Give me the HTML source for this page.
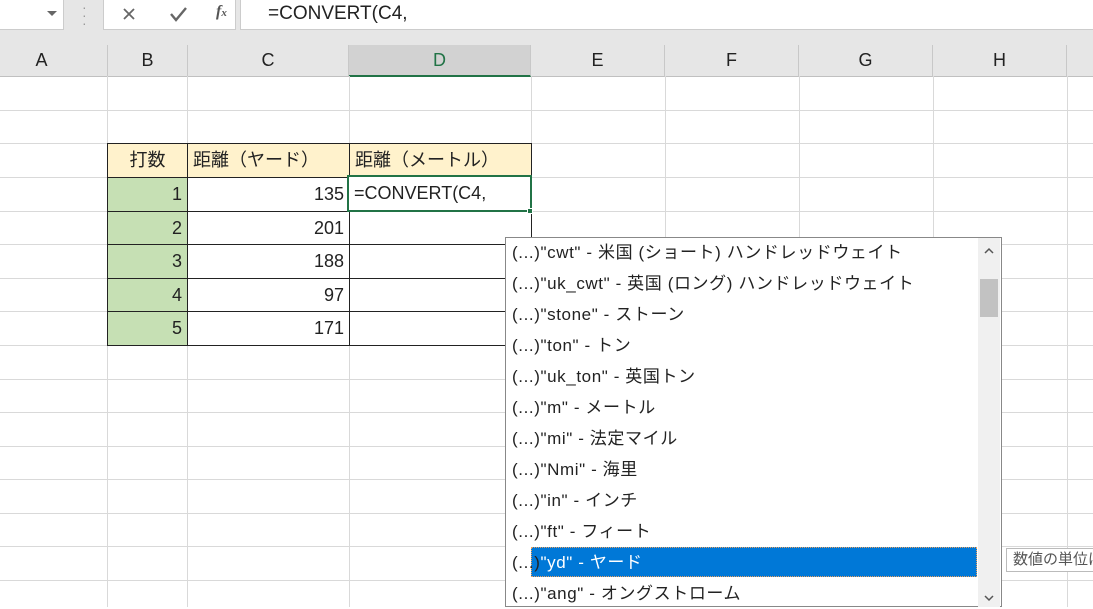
<!DOCTYPE html>
<html><head><meta charset="utf-8"><style>
*{margin:0;padding:0;box-sizing:border-box}
body{width:1093px;height:607px;overflow:hidden;background:#fff;position:relative;font-family:"Liberation Sans","Noto Sans CJK JP",sans-serif;color:#222}
.a{position:absolute}
.vl{position:absolute;width:1px;background:#d9d9d9;top:76px;height:531px}
.hl{position:absolute;height:1px;background:#d9d9d9;left:0;width:1093px}
.ch{position:absolute;top:45px;height:32px;line-height:31px;text-align:center;font-size:18px;color:#222;border-right:1px solid #c8c8c8;border-bottom:1px solid #c0c0c0;background:#e6e6e6}
.cell{position:absolute;font-size:18px;line-height:33px;padding:0 5px;border:1px solid #222}
.it{position:absolute;left:512px;font-size:17px;color:#222;white-space:nowrap;height:30px;line-height:30px;letter-spacing:0.6px}
</style></head><body>
<!-- formula bar -->
<div class="a" style="left:0;top:0;width:1093px;height:45px;background:#e6e6e6"></div>
<div class="a" style="left:0;top:0;width:64px;height:30px;background:#fff;border-right:1px solid #ccc;border-bottom:1px solid #ccc"></div>
<div class="a" style="left:47px;top:11px;border-left:5px solid transparent;border-right:5px solid transparent;border-top:5px solid #666"></div>
<div class="a" style="left:82px;top:3px;font-size:14px;color:#999;line-height:8px">·<br>·<br>·</div>
<div class="a" style="left:103px;top:0;width:133px;height:30px;background:#fff;border:1px solid #ccc;border-top:none"></div>
<svg class="a" style="left:118px;top:4px" width="130" height="22">
<path d="M6 5 L16 15 M16 5 L6 15" stroke="#666" stroke-width="1.8" fill="none"/>
<path d="M53 10 L58 16 L68 4" stroke="#666" stroke-width="2.4" fill="none"/>
</svg>
<div class="a" style="left:216px;top:3px;font-size:16px;color:#555;font-family:'Liberation Serif',serif;font-style:italic;font-weight:bold">f<span style="font-size:11px">x</span></div>
<div class="a" style="left:240px;top:0;width:853px;height:30px;background:#fff;border-left:1px solid #ccc;border-bottom:1px solid #ccc"></div>
<div class="a" style="left:268px;top:3px;font-size:19px;color:#222">=CONVERT(C4,</div>
<!-- column headers -->
<div class="a" style="left:0;top:45px;width:1093px;height:32px;background:#e6e6e6;border-bottom:1px solid #c0c0c0"></div>
<div class="ch" style="left:0;width:108px;text-indent:-24px">A</div>
<div class="ch" style="left:108px;width:80px">B</div>
<div class="ch" style="left:188px;width:161px">C</div>
<div class="ch" style="left:349px;width:182px;background:#d2d2d2;color:#217346;border-bottom:2px solid #217346">D</div>
<div class="ch" style="left:531px;width:134px">E</div>
<div class="ch" style="left:665px;width:134px">F</div>
<div class="ch" style="left:799px;width:134px">G</div>
<div class="ch" style="left:933px;width:134px">H</div>
<!-- grid -->
<div class="vl" style="left:107px"></div><div class="vl" style="left:187px"></div><div class="vl" style="left:349px"></div><div class="vl" style="left:531px"></div><div class="vl" style="left:665px"></div><div class="vl" style="left:799px"></div><div class="vl" style="left:933px"></div><div class="vl" style="left:1067px"></div>
<div class="hl" style="top:110px"></div><div class="hl" style="top:143px"></div><div class="hl" style="top:177px"></div><div class="hl" style="top:211px"></div><div class="hl" style="top:244px"></div><div class="hl" style="top:278px"></div><div class="hl" style="top:311px"></div><div class="hl" style="top:345px"></div><div class="hl" style="top:379px"></div><div class="hl" style="top:412px"></div><div class="hl" style="top:446px"></div><div class="hl" style="top:479px"></div><div class="hl" style="top:513px"></div><div class="hl" style="top:546px"></div><div class="hl" style="top:580px"></div>
<!-- table -->
<div class="cell" style="left:107px;top:143px;width:81px;height:35px;background:#fff2cc;text-align:center">打数</div>
<div class="cell" style="left:187px;top:143px;width:163px;height:35px;background:#fff2cc">距離（ヤード）</div>
<div class="cell" style="left:349px;top:143px;width:183px;height:35px;background:#fff2cc">距離（メートル）</div>
<div class="cell" style="left:107px;top:177px;width:81px;height:35px;background:#c6e0b4;text-align:right">1</div>
<div class="cell" style="left:187px;top:177px;width:163px;height:35px;text-align:right">135</div>
<div class="cell" style="left:349px;top:177px;width:183px;height:35px"></div>
<div class="cell" style="left:107px;top:211px;width:81px;height:34px;background:#c6e0b4;text-align:right">2</div>
<div class="cell" style="left:187px;top:211px;width:163px;height:34px;text-align:right">201</div>
<div class="cell" style="left:349px;top:211px;width:183px;height:34px"></div>
<div class="cell" style="left:107px;top:244px;width:81px;height:35px;background:#c6e0b4;text-align:right">3</div>
<div class="cell" style="left:187px;top:244px;width:163px;height:35px;text-align:right">188</div>
<div class="cell" style="left:349px;top:244px;width:183px;height:35px"></div>
<div class="cell" style="left:107px;top:278px;width:81px;height:34px;background:#c6e0b4;text-align:right">4</div>
<div class="cell" style="left:187px;top:278px;width:163px;height:34px;text-align:right">97</div>
<div class="cell" style="left:349px;top:278px;width:183px;height:34px"></div>
<div class="cell" style="left:107px;top:311px;width:81px;height:35px;background:#c6e0b4;text-align:right">5</div>
<div class="cell" style="left:187px;top:311px;width:163px;height:35px;text-align:right">171</div>
<div class="cell" style="left:349px;top:311px;width:183px;height:35px"></div>
<!-- active cell -->
<div class="a" style="left:347px;top:175px;width:185px;height:37px;border:2px solid #217346;background:#fff;font-size:18px;line-height:33px;padding-left:5px">=CONVERT(C4,</div>
<div class="a" style="left:527px;top:208px;width:6px;height:6px;background:#217346;border:1px solid #fff"></div>
<!-- dropdown -->
<div class="a" style="left:505px;top:237px;width:497px;height:370px;background:#fff;border:1px solid #888"></div>
<div class="a" style="left:978px;top:238px;width:22px;height:369px;background:#f0f0f0"></div>
<div class="a" style="left:980px;top:279px;width:18px;height:38px;background:#c2c2c2"></div>
<svg class="a" style="left:978px;top:238px" width="22" height="369">
<path d="M7 15 L11 11 L15 15" stroke="#555" stroke-width="1.5" fill="none"/>
<path d="M7 358 L11 362 L15 358" stroke="#555" stroke-width="1.5" fill="none"/>
</svg>
<div class="a" style="left:531px;top:547px;width:446px;height:30px;background:#0078d7;border:1px dotted #e8a060"></div>
<div class="it" style="top:238px">(...)"cwt" - 米国 (ショート) ハンドレッドウェイト</div>
<div class="it" style="top:269px">(...)"uk_cwt" - 英国 (ロング) ハンドレッドウェイト</div>
<div class="it" style="top:300px">(...)"stone" - ストーン</div>
<div class="it" style="top:331px">(...)"ton" - トン</div>
<div class="it" style="top:362px">(...)"uk_ton" - 英国トン</div>
<div class="it" style="top:393px">(...)"m" - メートル</div>
<div class="it" style="top:424px">(...)"mi" - 法定マイル</div>
<div class="it" style="top:455px">(...)"Nmi" - 海里</div>
<div class="it" style="top:486px">(...)"in" - インチ</div>
<div class="it" style="top:517px">(...)"ft" - フィート</div>
<div class="it" style="top:548px">(...)<span style="color:#fff">"yd" - ヤード</span></div>
<div class="it" style="top:579px">(...)"ang" - オングストローム</div>
<!-- tooltip -->
<div class="a" style="left:1006px;top:548px;width:100px;height:24px;background:#fff;border:1px solid #bbb;font-size:15px;line-height:22px;padding-left:6px;color:#555;white-space:nowrap">数値の単位は</div>
</body></html>
